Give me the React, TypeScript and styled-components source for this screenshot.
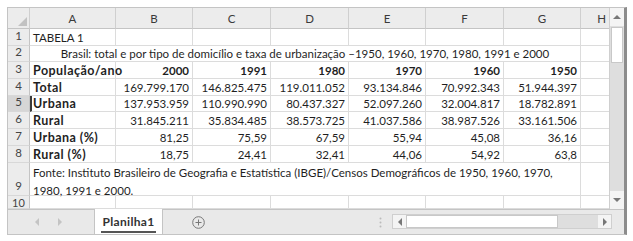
import React from 'react';
import styled, { createGlobalStyle, css } from 'styled-components';

const GlobalStyle = createGlobalStyle`
  html, body {
    margin: 0;
    padding: 0;
    background: #ffffff;
  }
  body {
    font-family: Lato, 'Open Sans', Arial, sans-serif;
    color: #1f1f1f;
  }
`;

const COLS = [22, 86, 77, 78, 78, 77, 78, 77, 30];
const ROWS = [21, 17, 16, 17, 17, 16, 17, 17, 17, 33, 13];

const Frame = styled.div`
  margin: 7px 0 0 7px;
  width: 620px;
  height: 228px;
  box-sizing: border-box;
  border: 1px solid #c4c4c4;
  border-right: 3px solid #8c8c8c;
  display: flex;
  flex-direction: column;
  overflow: hidden;
`;

const Body = styled.div`
  display: flex;
  height: 201px;
`;

const Sheet = styled.div`
  display: grid;
  grid-template-columns: ${COLS.map((c) => `${c}px`).join(' ')};
  grid-template-rows: ${ROWS.map((r) => `${r}px`).join(' ')};
  overflow: hidden;
  font-size: 11.5px;
`;

const HeadCell = styled.div<{ $corner?: boolean; $clip?: boolean }>`
  box-sizing: border-box;
  background: #ececec;
  border-right: 1px solid #cfcfcf;
  border-bottom: 1px solid #c4c4c4;
  color: #3a3a3a;
  display: flex;
  align-items: center;
  justify-content: ${(p) => (p.$clip ? 'flex-end' : 'center')};
  padding-right: ${(p) => (p.$clip ? '4px' : '0')};
  overflow: hidden;
  position: relative;
  ${(p) =>
    p.$corner &&
    css`
      &::after {
        content: '';
        position: absolute;
        right: 2px;
        bottom: 2px;
        border-left: 9px solid transparent;
        border-bottom: 9px solid #c2c2c2;
      }
    `}
`;

const RowHead = styled.div<{ $active?: boolean; $top?: boolean }>`
  box-sizing: border-box;
  background: ${(p) => (p.$active ? '#d6d6d6' : '#ececec')};
  border-right: 1px solid #c4c4c4;
  border-bottom: 1px solid #d8d8d8;
  color: #444;
  display: flex;
  justify-content: center;
  align-items: ${(p) => (p.$top ? 'flex-start' : 'flex-end')};
  line-height: ${(p) => (p.$top ? '13px' : '16px')};
  font-size: ${(p) => (p.$top ? '11px' : 'inherit')};
  overflow: hidden;
  padding-bottom: ${(p) => (p.$top ? '0' : '1px')};
`;

const Cell = styled.div<{
  $right?: boolean;
  $bold?: boolean;
  $label?: boolean;
  $center?: boolean;
  $span?: number;
  $active?: boolean;
  $wrap?: boolean;
}>`
  box-sizing: border-box;
  border-right: 1px solid #dcdcdc;
  border-bottom: 1px solid #dcdcdc;
  padding: 0 3px 0 3px;
  display: flex;
  align-items: ${(p) => (p.$wrap ? 'flex-start' : 'center')};
  justify-content: ${(p) => (p.$right ? 'flex-end' : p.$center ? 'center' : 'flex-start')};
  font-weight: ${(p) => (p.$bold ? 700 : 400)};
  white-space: nowrap;
  overflow: visible;
  ${(p) =>
    p.$label &&
    css`
      font-size: 12.5px;
      letter-spacing: 0.45px;
    `}
  ${(p) => p.$span && css`grid-column: span ${p.$span};`}
  ${(p) =>
    p.$active &&
    css`
      border-left: 2px solid #3a3a3a;
      padding-left: 1px;
    `}
  ${(p) =>
    p.$wrap &&
    css`
      flex-direction: column;
      line-height: 17.5px;
      padding-top: 1px;
    `}
`;

const VScroll = styled.div`
  width: 15px;
  display: flex;
  flex-direction: column;
  background: #dedede;
  border-left: 1px solid #cfcfcf;
  box-sizing: border-box;
`;

const ArrowBox = styled.div`
  height: 18px;
  background: #f4f4f4;
  display: flex;
  align-items: center;
  justify-content: center;
  flex-shrink: 0;
`;

const Thumb = styled.div`
  height: 36px;
  margin: 1px 1px 0 1px;
  background: #ffffff;
  border: 1px solid #c8c8c8;
  box-sizing: border-box;
`;

const Track = styled.div`
  flex: 1;
`;

const TabBar = styled.div`
  height: 26px;
  background: #e9e9e9;
  border-top: 1px solid #c4c4c4;
  box-sizing: border-box;
  display: flex;
  align-items: stretch;
  font-size: 11.5px;
`;

const Nav = styled.div`
  width: 86px;
  display: flex;
  align-items: center;
  padding-left: 26px;
  gap: 17px;
  box-sizing: border-box;
`;

const Tab = styled.div`
  width: 67px;
  background: #ffffff;
  margin-top: -1px;
  border-left: 1px solid #c4c4c4;
  border-right: 1px solid #c4c4c4;
  display: flex;
  align-items: center;
  justify-content: center;
  font-weight: 700;
  font-size: 12px;
  letter-spacing: 0.3px;
  color: #333;
  position: relative;
  &::after {
    content: '';
    position: absolute;
    left: 6px;
    right: 6px;
    bottom: 1px;
    height: 2px;
    background: #555;
  }
`;

const AddBtn = styled.div`
  width: 70px;
  display: flex;
  align-items: center;
  justify-content: center;
`;

const Spacer = styled.div`
  flex: 1;
  display: flex;
  align-items: center;
  justify-content: flex-end;
  padding-right: 10px;
`;

const HScroll = styled.div`
  width: 220px;
  margin: 4px 12px 5px 0;
  display: flex;
  background: #dedede;
  border: 1px solid #cfcfcf;
  box-sizing: border-box;
`;

const HArrow = styled.div`
  width: 13px;
  background: #f4f4f4;
  display: flex;
  align-items: center;
  justify-content: center;
`;

const HThumb = styled.div`
  width: 152px;
  background: #ffffff;
  border: 1px solid #c8c8c8;
  box-sizing: border-box;
`;

const Tri = ({ dir, color = '#777' }: { dir: 'up' | 'down' | 'left' | 'right'; color?: string }) => {
  const pts = {
    up: '0,5 4,1 8,5',
    down: '0,1 4,5 8,1',
    left: '5,0 1,4 5,8',
    right: '1,0 5,4 1,8',
  }[dir];
  const w = dir === 'up' || dir === 'down' ? 8 : 6;
  const h = dir === 'up' || dir === 'down' ? 6 : 8;
  return (
    <svg width={w} height={h} viewBox={`0 0 ${w} ${h}`}>
      <polygon points={pts} fill={color} />
    </svg>
  );
};

const years = ['2000', '1991', '1980', '1970', '1960', '1950'];

const data: [string, string[]][] = [
  ['Total', ['169.799.170', '146.825.475', '119.011.052', '93.134.846', '70.992.343', '51.944.397']],
  ['Urbana', ['137.953.959', '110.990.990', '80.437.327', '52.097.260', '32.004.817', '18.782.891']],
  ['Rural', ['31.845.211', '35.834.485', '38.573.725', '41.037.586', '38.987.526', '33.161.506']],
  ['Urbana (%)', ['81,25', '75,59', '67,59', '55,94', '45,08', '36,16']],
  ['Rural (%)', ['18,75', '24,41', '32,41', '44,06', '54,92', '63,8']],
];

export default function App() {
  return (
    <>
      <GlobalStyle />
      <Frame>
        <Body>
          <Sheet>
            <HeadCell $corner />
            {['A', 'B', 'C', 'D', 'E', 'F', 'G'].map((l) => (
              <HeadCell key={l}>{l}</HeadCell>
            ))}
            <HeadCell $clip>H</HeadCell>

            <RowHead>1</RowHead>
            <Cell>TABELA 1</Cell>
            {[0, 1, 2, 3, 4, 5, 6].map((i) => (
              <Cell key={i} />
            ))}

            <RowHead>2</RowHead>
            <Cell $span={7} $center>
              Brasil: total e por tipo de domicílio e taxa de urbanização –1950, 1960, 1970, 1980, 1991 e 2000
            </Cell>
            <Cell />

            <RowHead>3</RowHead>
            <Cell $bold $label>
              População/ano
            </Cell>
            {years.map((y) => (
              <Cell key={y} $right $bold>
                {y}
              </Cell>
            ))}
            <Cell />

            {data.map(([label, vals], r) => (
              <React.Fragment key={label}>
                <RowHead $active={r === 1}>{r + 4}</RowHead>
                <Cell $bold $label $active={r === 1}>
                  {label}
                </Cell>
                {vals.map((v, i) => (
                  <Cell key={i} $right>
                    {v}
                  </Cell>
                ))}
                <Cell />
              </React.Fragment>
            ))}

            <RowHead>9</RowHead>
            <Cell $span={7} $wrap>
              <span>Fonte: Instituto Brasileiro de Geografia e Estatística (IBGE)/Censos Demográficos de 1950, 1960, 1970,</span>
              <span>1980, 1991 e 2000.</span>
            </Cell>
            <Cell />

            <RowHead $top>10</RowHead>
            {[0, 1, 2, 3, 4, 5, 6, 7].map((i) => (
              <Cell key={i} />
            ))}
          </Sheet>
          <VScroll>
            <ArrowBox>
              <Tri dir="up" />
            </ArrowBox>
            <Thumb />
            <Track />
            <ArrowBox>
              <Tri dir="down" />
            </ArrowBox>
          </VScroll>
        </Body>
        <TabBar>
          <Nav>
            <Tri dir="left" color="#c4c4c4" />
            <Tri dir="right" color="#c4c4c4" />
          </Nav>
          <Tab>Planilha1</Tab>
          <AddBtn>
            <svg width="13" height="13" viewBox="0 0 13 13">
              <circle cx="6.5" cy="6.5" r="5.8" fill="none" stroke="#777" strokeWidth="1" />
              <line x1="6.5" y1="3.5" x2="6.5" y2="9.5" stroke="#777" strokeWidth="1" />
              <line x1="3.5" y1="6.5" x2="9.5" y2="6.5" stroke="#777" strokeWidth="1" />
            </svg>
          </AddBtn>
          <Spacer>
            <svg width="3" height="11" viewBox="0 0 3 11">
              <circle cx="1.5" cy="1.5" r="1" fill="#bbb" />
              <circle cx="1.5" cy="5.5" r="1" fill="#bbb" />
              <circle cx="1.5" cy="9.5" r="1" fill="#bbb" />
            </svg>
          </Spacer>
          <HScroll>
            <HArrow>
              <Tri dir="left" />
            </HArrow>
            <HThumb />
            <Track />
            <HArrow>
              <Tri dir="right" />
            </HArrow>
          </HScroll>
        </TabBar>
      </Frame>
    </>
  );
}
